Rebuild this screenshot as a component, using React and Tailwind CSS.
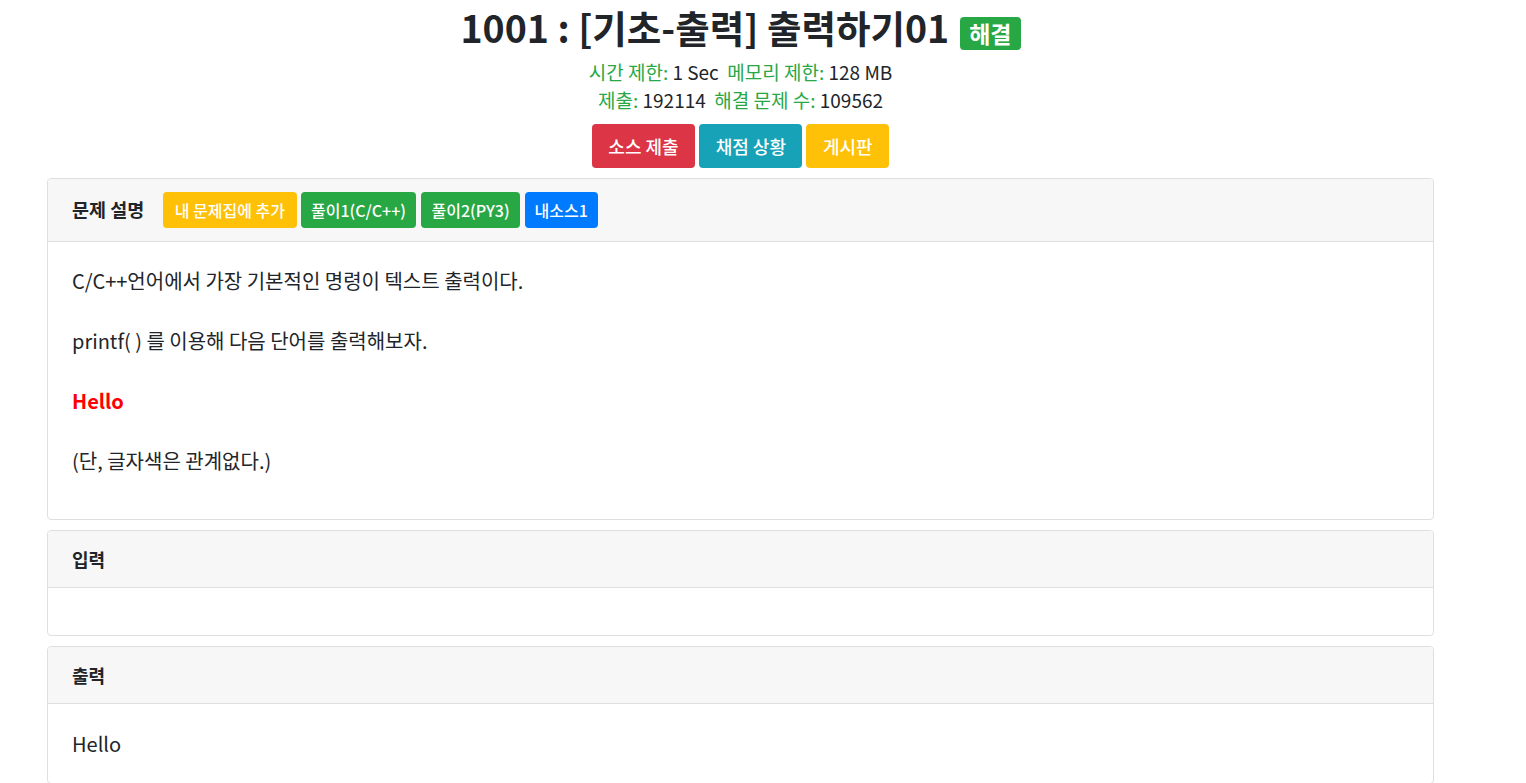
export default function App() {
  const font = { fontFamily: '"Noto Sans CJK KR", "Noto Sans", sans-serif' };
  return (
    <div className="w-[1481px] bg-white text-[#212529]" style={font}>
      <div className="flex flex-col items-center">
        <div className="flex items-start gap-[11px]">
          <h1 className="text-[37.5px] font-bold leading-[54px] text-[#212529]">1001 : [기초-출력] 출력하기01</h1>
          <span className="mt-[17px] rounded-[4px] bg-[#28a745] px-[9px] text-[23px] font-bold leading-[33px] text-white">해결</span>
        </div>
        <div className="mt-[4px] text-[19px] leading-[28px]">
          <span className="text-[#28a745]">시간 제한:</span> 1 Sec&nbsp; <span className="text-[#28a745]">메모리 제한:</span> 128 MB
        </div>
        <div className="text-[19px] leading-[28px]">
          <span className="text-[#28a745]">제출:</span> 192114&nbsp; <span className="text-[#28a745]">해결 문제 수:</span> 109562
        </div>
        <div className="mt-[10px] flex gap-[4px]">
          <button className="h-[44px] rounded-[4px] bg-[#dc3545] px-[16.5px] text-[18px] font-medium text-white">소스 제출</button>
          <button className="h-[44px] rounded-[4px] bg-[#17a2b8] px-[16.5px] text-[18px] font-medium text-white">채점 상황</button>
          <button className="h-[44px] rounded-[4px] bg-[#ffc107] px-[16.5px] text-[18px] font-medium text-white">게시판</button>
        </div>
      </div>

      <div className="mt-[10px] flex flex-col gap-[10px] px-[47px]">
        <div className="rounded-[4px] border border-[#dfdfdf]">
          <div className="flex items-center gap-[4px] rounded-t-[4px] border-b border-[#dfdfdf] bg-[#f7f7f7] px-[24px] py-[13px]">
            <span className="mr-[15px] text-[18.5px] font-bold">문제 설명</span>
            <span className="flex h-[36px] items-center rounded-[4px] bg-[#ffc107] px-[11.5px] text-[16px] font-medium text-white">내 문제집에 추가</span>
            <span className="flex h-[36px] items-center rounded-[4px] bg-[#28a745] px-[10.5px] text-[16px] font-medium text-white">풀이1(C/C++)</span>
            <span className="ml-[1px] flex h-[36px] items-center rounded-[4px] bg-[#28a745] px-[10px] text-[16px] font-medium text-white">풀이2(PY3)</span>
            <span className="ml-[1px] flex h-[36px] items-center rounded-[4px] bg-[#007bff] px-[10px] text-[16px] font-medium text-white">내소스1</span>
          </div>
          <div className="flex flex-col gap-[30px] px-[24px] pb-[43px] pt-[24px] text-[20px] leading-[30px]">
            <p>C/C++언어에서 가장 기본적인 명령이 텍스트 출력이다.</p>
            <p>printf( ) 를 이용해 다음 단어를 출력해보자.</p>
            <p className="font-bold text-[#ff0000]">Hello</p>
            <p>(단, 글자색은 관계없다.)</p>
          </div>
        </div>

        <div className="rounded-[4px] border border-[#dfdfdf]">
          <div className="rounded-t-[4px] border-b border-[#dfdfdf] bg-[#f7f7f7] px-[24px] py-[16px] text-[18px] font-bold leading-[24px]">입력</div>
          <div className="h-[47px]"></div>
        </div>

        <div className="rounded-[4px] border border-[#dfdfdf]">
          <div className="rounded-t-[4px] border-b border-[#dfdfdf] bg-[#f7f7f7] px-[24px] py-[16px] text-[18px] font-bold leading-[24px]">출력</div>
          <div className="px-[24px] pb-[24px] pt-[25px] text-[20px] leading-[30px]">
            <p>Hello</p>
          </div>
        </div>
      </div>
    </div>
  );
}
